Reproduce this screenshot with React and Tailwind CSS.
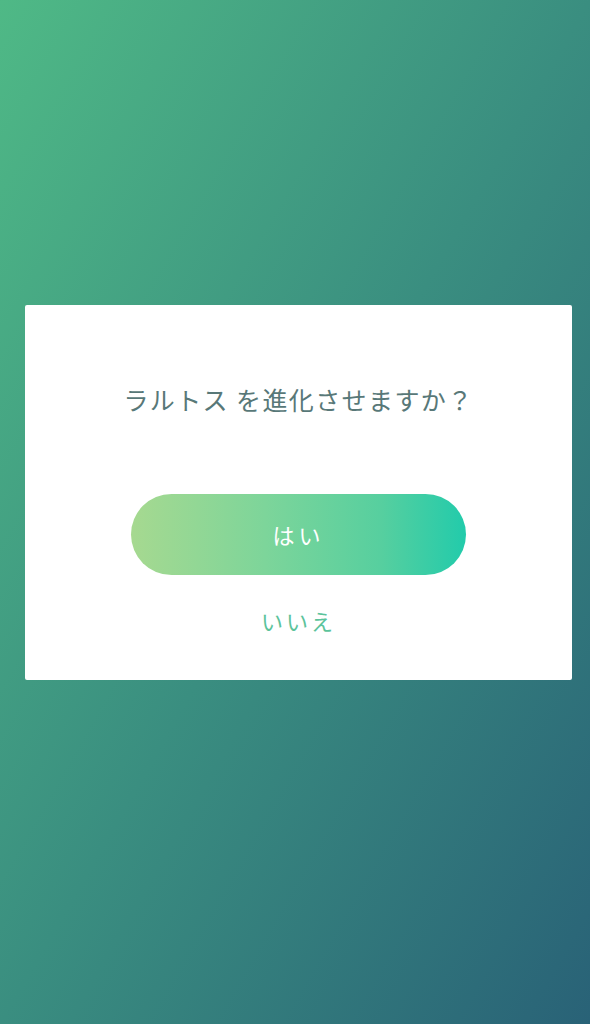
export default function App() {
  return (
    <div
      className="w-[590px] h-[1024px] bg-[linear-gradient(to_bottom_right,#4fb986_0%,#3a8e80_50%,#296277_100%)] pt-[305px]"
      style={{ fontFamily: '"Noto Sans CJK JP", "Noto Sans", sans-serif' }}
    >
      <div className="ml-[25px] w-[547px] h-[375px] bg-white rounded-[2px] flex flex-col items-center pt-[78px]">
        <div className="text-[25px] leading-[32px] text-[#587878] tracking-[1.4px]">
          ラルトス を進化させますか？
        </div>
        <button className="mt-[79px] w-[335px] h-[81px] rounded-full bg-[linear-gradient(90deg,#a6d990_0%,#7dd59a_40%,#56cf9f_75%,#22cbab_100%)] text-white text-[22px] tracking-[4px] flex items-center justify-center">
          はい
        </button>
        <div className="mt-[29px] text-[22px] leading-[32px] text-[#5cc39b] tracking-[3px]">
          いいえ
        </div>
      </div>
    </div>
  );
}
